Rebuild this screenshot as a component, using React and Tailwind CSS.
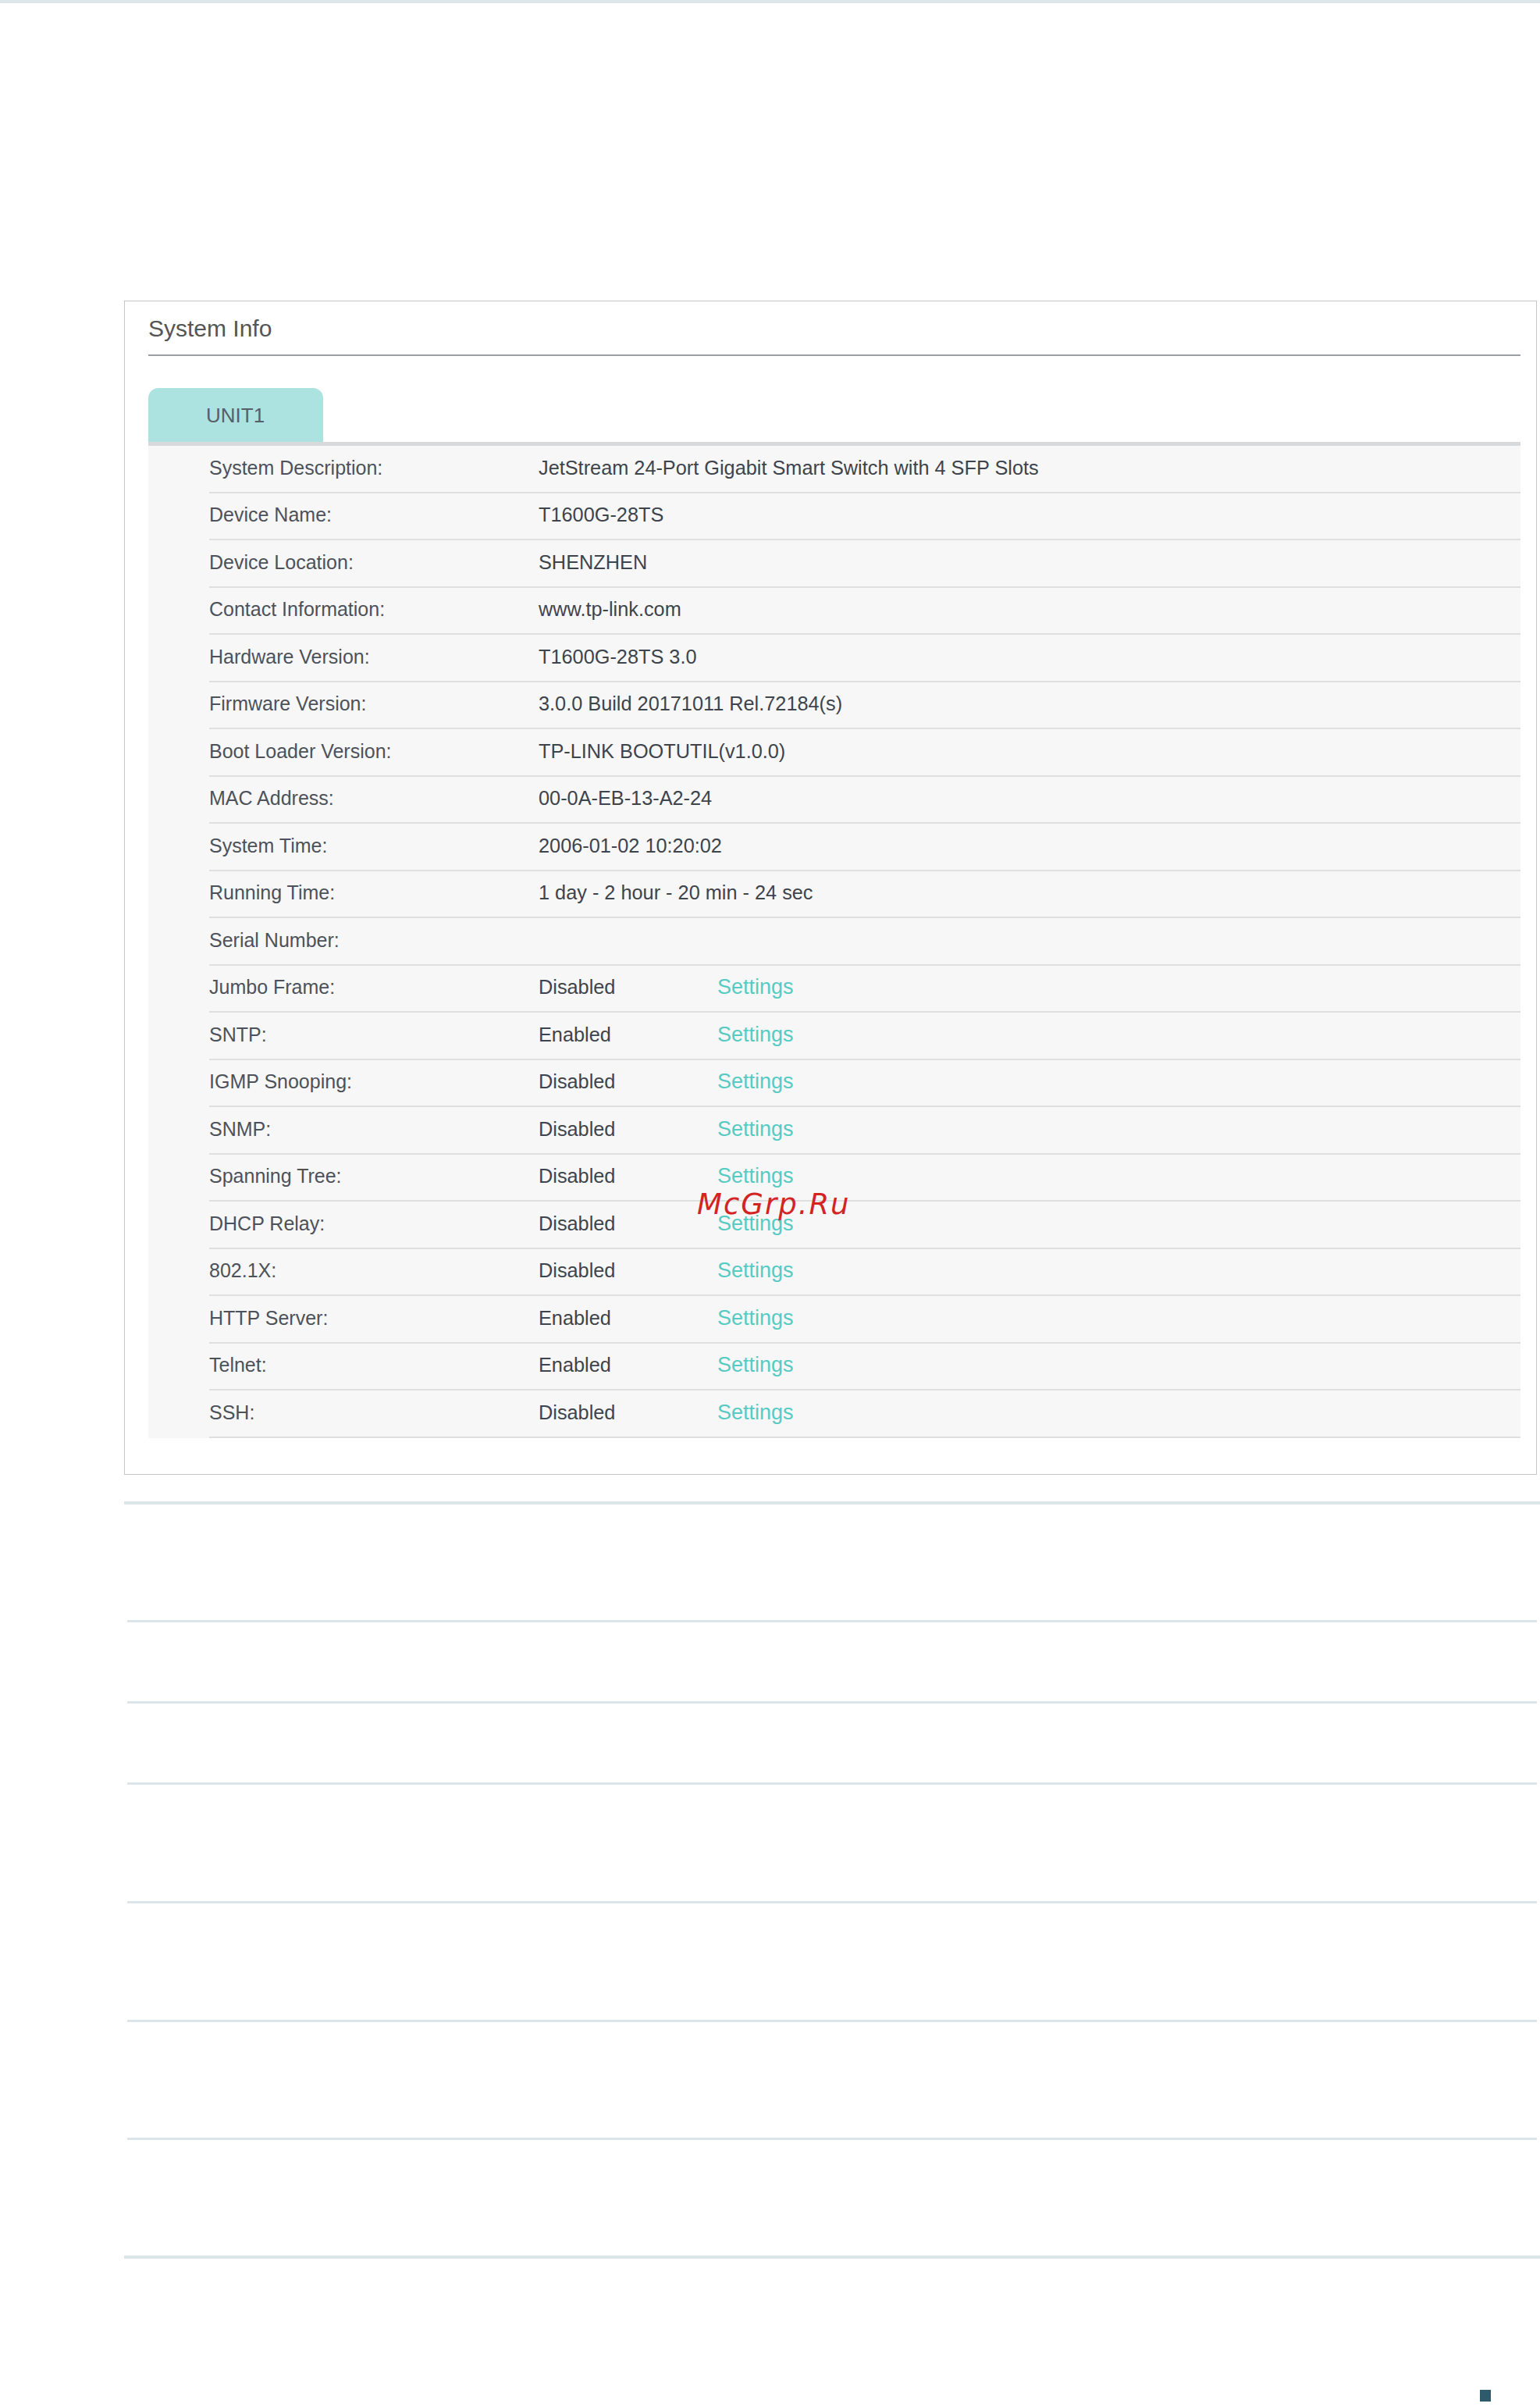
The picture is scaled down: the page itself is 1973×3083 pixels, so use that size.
import React from "react";

const rows = [
  ["System Description:", "JetStream 24-Port Gigabit Smart Switch with 4 SFP Slots", false],
  ["Device Name:", "T1600G-28TS", false],
  ["Device Location:", "SHENZHEN", false],
  ["Contact Information:", "www.tp-link.com", false],
  ["Hardware Version:", "T1600G-28TS 3.0", false],
  ["Firmware Version:", "3.0.0 Build 20171011 Rel.72184(s)", false],
  ["Boot Loader Version:", "TP-LINK BOOTUTIL(v1.0.0)", false],
  ["MAC Address:", "00-0A-EB-13-A2-24", false],
  ["System Time:", "2006-01-02 10:20:02", false],
  ["Running Time:", "1 day - 2 hour - 20 min - 24 sec", false],
  ["Serial Number:", "", false],
  ["Jumbo Frame:", "Disabled", true],
  ["SNTP:", "Enabled", true],
  ["IGMP Snooping:", "Disabled", true],
  ["SNMP:", "Disabled", true],
  ["Spanning Tree:", "Disabled", true],
  ["DHCP Relay:", "Disabled", true],
  ["802.1X:", "Disabled", true],
  ["HTTP Server:", "Enabled", true],
  ["Telnet:", "Enabled", true],
  ["SSH:", "Disabled", true],
];

function Row({ label, value, settings }) {
  return (
    <div className="flex h-[60.5px] items-center border-b-2 border-[#dedfe0] pb-[2px]">
      <div className="w-[422px] shrink-0 text-[25px] leading-none text-[#4d525a]">{label}</div>
      <div className="w-[229px] shrink-0 whitespace-nowrap text-[25.3px] leading-none text-[#3e444c]">{value}</div>
      {settings && (
        <div className="text-[27px] leading-none text-[#56cbc3]">Settings</div>
      )}
    </div>
  );
}

export default function App() {
  return (
    <div
      className="relative h-[3083px] w-full overflow-hidden bg-white"
      style={{ fontFamily: '"Liberation Sans", Arial, sans-serif' }}
    >
      <div className="h-[4px] w-full bg-[#dde6eb]" />

      {/* System Info panel */}
      <div className="ml-[159px] mt-[381px] w-[1810px] border border-[#c6c6c6] pb-[46px] pl-[30px] pr-[20px]">
        <div className="border-b-2 border-[#9c9fa2] pb-[18px] pt-[20px]">
          <div className="text-[30px] leading-none text-[#555555]">System Info</div>
        </div>

        <div className="mt-[41px] flex h-[69px] w-[224px] items-center rounded-t-[13px] bg-[#ace3e0] pl-[74px]">
          <span className="text-[26px] leading-none text-[#566068]">UNIT1</span>
        </div>
        <div className="h-[5px] bg-[#d8d9da]" />

        <div className="bg-[#f7f7f7] pl-[78px]">
          {rows.map(([l, v, s]) => (
            <Row key={l} label={l} value={v} settings={s} />
          ))}
        </div>
      </div>

      {/* lines below */}
      <div className="ml-[159px] mt-[34px] h-[4px] w-[1814px] bg-[#dbe5ea]" />
      <div className="ml-[163px] mt-[148px] h-[3px] w-[1806px] bg-[#dbe5ea]" />
      <div className="ml-[163px] mt-[101px] h-[3px] w-[1806px] bg-[#dbe5ea]" />
      <div className="ml-[163px] mt-[101px] h-[3px] w-[1806px] bg-[#dbe5ea]" />
      <div className="ml-[163px] mt-[149px] h-[3px] w-[1806px] bg-[#dbe5ea]" />
      <div className="ml-[163px] mt-[149px] h-[3px] w-[1806px] bg-[#dbe5ea]" />
      <div className="ml-[163px] mt-[148px] h-[3px] w-[1806px] bg-[#dbe5ea]" />
      <div className="ml-[159px] mt-[148px] h-[4px] w-[1814px] bg-[#dbe5ea]" />

      <div className="ml-[1896px] mt-[168px] h-[15px] w-[14px] bg-[#2e5a6b]" />

      {/* watermark */}
      <div
        className="absolute left-[893px] top-[1524px] text-[37px] italic leading-none tracking-[2px] text-[#d42323]"
        style={{ fontFamily: '"DejaVu Sans", sans-serif' }}
      >
        McGrp.Ru
      </div>
    </div>
  );
}
